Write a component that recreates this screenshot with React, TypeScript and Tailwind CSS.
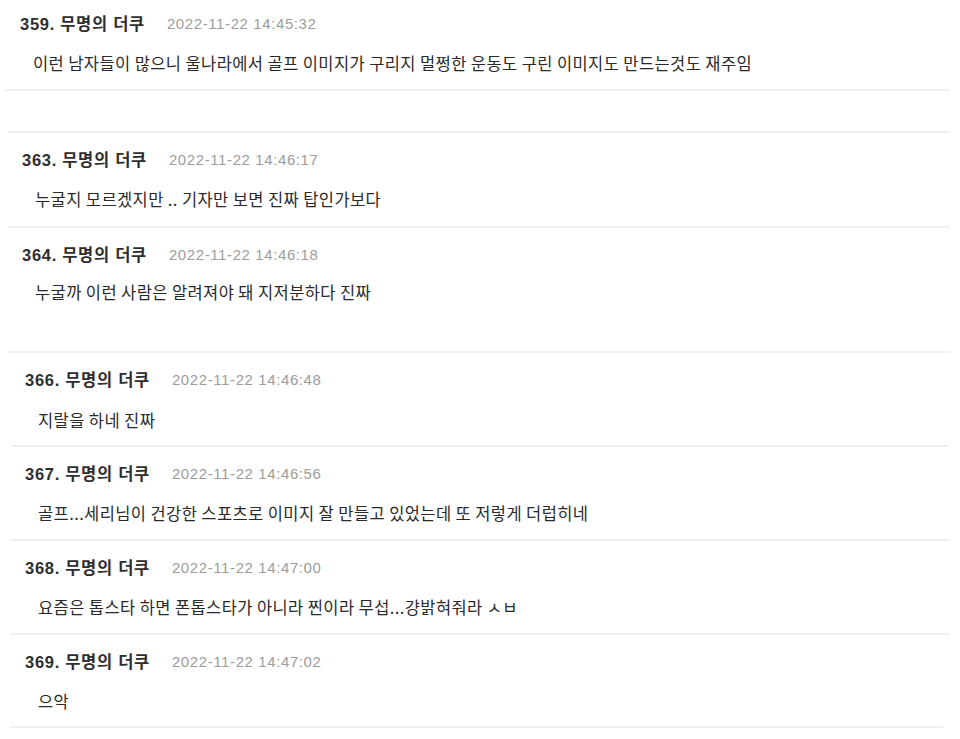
import React from "react";

type Item = {
  no: string;
  time: string;
  body: string;
  ml: string;
  mr: string;
  pl: string;
  h: string;
  pt: string;
  gap: string;
};

const items: Item[] = [
  { no: "363", time: "2022-11-22 14:46:17", body: "누굴지 모르겠지만 .. 기자만 보면 진짜 탑인가보다", ml: "ml-[8px]", mr: "mr-[10px]", pl: "pl-[14px]", h: "h-[95px]", pt: "pt-[17px]", gap: "mt-[18px]" },
  { no: "364", time: "2022-11-22 14:46:18", body: "누굴까 이런 사람은 알려져야 돼 지저분하다 진짜", ml: "ml-[8px]", mr: "mr-[10px]", pl: "pl-[14px]", h: "h-[125px]", pt: "pt-[17px]", gap: "mt-[16px]" },
  { no: "366", time: "2022-11-22 14:46:48", body: "지랄을 하네 진짜", ml: "ml-[12px]", mr: "mr-[12px]", pl: "pl-[13px]", h: "h-[94px]", pt: "pt-[17px]", gap: "mt-[19px]" },
  { no: "367", time: "2022-11-22 14:46:56", body: "골프...세리님이 건강한 스포츠로 이미지 잘 만들고 있었는데 또 저렇게 더럽히네", ml: "ml-[10px]", mr: "mr-[10px]", pl: "pl-[15px]", h: "h-[94px]", pt: "pt-[17px]", gap: "mt-[18px]" },
  { no: "368", time: "2022-11-22 14:47:00", body: "요즘은 톱스타 하면 폰톱스타가 아니라 찐이라 무섭...걍밝혀줘라 ㅅㅂ", ml: "ml-[10px]", mr: "mr-[10px]", pl: "pl-[15px]", h: "h-[94px]", pt: "pt-[17px]", gap: "mt-[18px]" },
  { no: "369", time: "2022-11-22 14:47:02", body: "으악", ml: "ml-[10px]", mr: "mr-[17px]", pl: "pl-[15px]", h: "h-[93px]", pt: "pt-[17px]", gap: "mt-[18px]" },
];

function Header({ no, time }: { no: string; time: string }) {
  return (
    <div className="flex h-5 items-center">
      <span className="text-[16.5px] font-bold text-[#2e2e2e] tracking-[0.7px] [font-family:'Liberation_Sans','Noto_Sans_CJK_KR',sans-serif]">
        {no}. 무명의 더쿠
      </span>
      <span className="ml-[22px] text-[15px] text-[#9c9c9c] tracking-[0.6px] [font-family:'Liberation_Sans','Noto_Sans_CJK_KR',sans-serif]">
        {time}
      </span>
    </div>
  );
}

function Body({ text, gap }: { text: string; gap: string }) {
  return (
    <div className={`${gap} flex h-[22px] items-center pl-[13px] text-[16.5px] tracking-[0.4px] text-[#2a2a2a] [font-family:'Noto_Sans_CJK_KR',sans-serif]`}>
      {text}
    </div>
  );
}

export default function App() {
  return (
    <div className="h-[739px] w-[960px] overflow-hidden bg-white">
      <div className="ml-[5px] mr-[10px] h-[91px] border-b-2 border-[#f0f0f0] pl-[15px] pt-[14px]">
        <Header no="359" time="2022-11-22 14:45:32" />
        <Body text="이런 남자들이 많으니 울나라에서 골프 이미지가 구리지 멀쩡한 운동도 구린 이미지도 만드는것도 재주임" gap="mt-[18px]" />
      </div>
      <div className="ml-[8px] mr-[10px] h-[42px] border-b-2 border-[#f0f0f0]" />
      {items.map((it) => (
        <div key={it.no} className={`${it.ml} ${it.mr} ${it.h} ${it.pl} ${it.pt} border-b-2 border-[#f0f0f0]`}>
          <Header no={it.no} time={it.time} />
          <Body text={it.body} gap={it.gap} />
        </div>
      ))}
    </div>
  );
}
